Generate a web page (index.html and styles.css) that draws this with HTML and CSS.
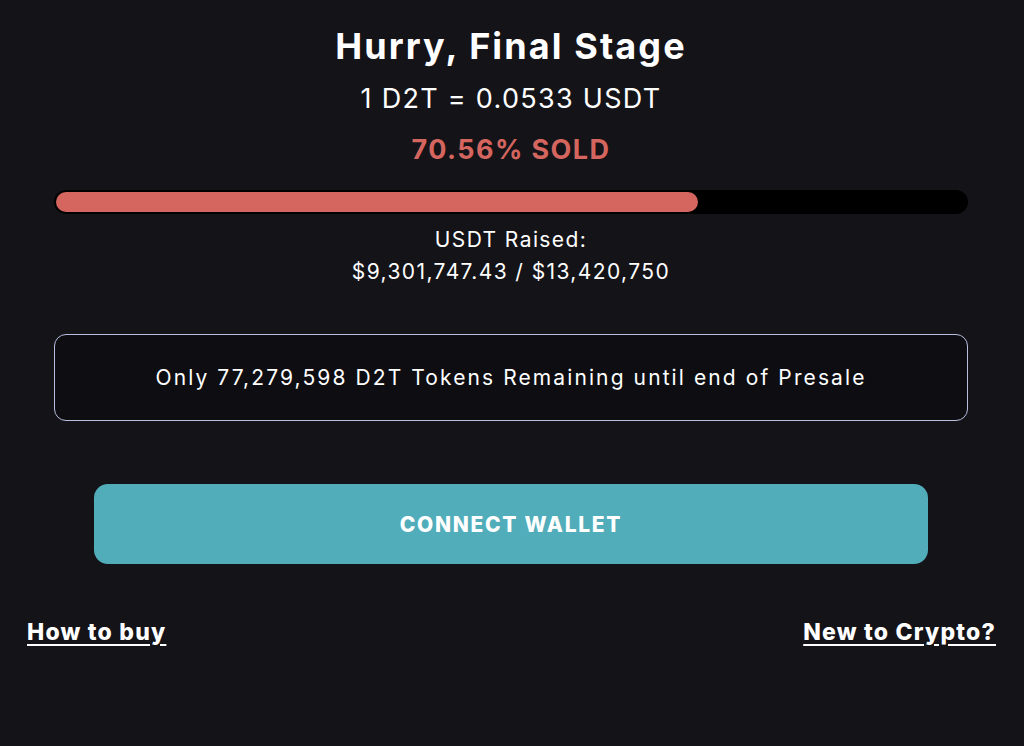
FILE: index.html
```html
<!DOCTYPE html>
<html lang="en">

<head>
    <meta charset="UTF-8">
    <meta name="viewport" content="width=device-width, initial-scale=1.0">
    <title>Presale</title>
    <link rel="stylesheet" href="styles.css">
</head>

<body>
    <div class="presale">
        <h1 class="stage-title">Hurry, Final Stage</h1>
        <p class="price">1 D2T = 0.0533 USDT</p>
        <p class="sold">70.56% SOLD</p>

        <div class="progress">
            <div class="progress-fill" style="width: 70.56%"></div>
        </div>

        <div class="raised">
            <p>USDT Raised:</p>
            <p>$9,301,747.43 / $13,420,750</p>
        </div>

        <div class="remaining">
            Only 77,279,598 D2T Tokens Remaining until end of Presale
        </div>

        <button type="button" class="connect-btn">Connect Wallet</button>

        <div class="links">
            <a href="#">How to buy</a>
            <a href="#">New to Crypto?</a>
        </div>
    </div>
</body>

</html>
```

FILE: styles.css
```css
body {
    font-family: Inter, "Open Sans", sans-serif;
    margin: 0;
    padding: 0;
    background-color: #141318;
    color: #fff;
}

.presale {
    padding: 24px 56px 0 54px;
}

p {
    margin: 0;
}

.stage-title {
    margin: 0;
    font-size: 36px;
    font-weight: 700;
    letter-spacing: 2.1px;
    text-align: center;
    line-height: 44px;
}

.price {
    margin-top: 14px;
    font-size: 27px;
    letter-spacing: 1.3px;
    text-align: center;
    line-height: 34px;
}

.sold {
    margin-top: 17px;
    font-size: 27px;
    font-weight: 700;
    letter-spacing: 1.4px;
    color: #d4655f;
    text-align: center;
    line-height: 34px;
}

.progress {
    margin-top: 23px;
    height: 24px;
    background-color: #000;
    border-radius: 12px;
    padding: 2px;
    box-sizing: border-box;
}

.progress-fill {
    height: 100%;
    background-color: #d4655f;
    border-radius: 10px;
}

.raised {
    margin-top: 10px;
    text-align: center;
    font-size: 21px;
    letter-spacing: 1.4px;
    line-height: 32px;
}

.remaining {
    margin-top: 46px;
    height: 87px;
    box-sizing: border-box;
    display: flex;
    align-items: center;
    justify-content: center;
    background-color: #0e0e12;
    border: 1.5px solid #b8c0e2;
    border-radius: 12px;
    font-size: 21px;
    letter-spacing: 2.1px;
}

.connect-btn {
    display: block;
    width: calc(100% - 80px);
    height: 80px;
    margin: 63px auto 0;
    background-color: #52adbb;
    color: #fff;
    border: none;
    border-radius: 14px;
    font-family: inherit;
    font-size: 21px;
    font-weight: 800;
    text-transform: uppercase;
    letter-spacing: 1.7px;
    cursor: pointer;
}

.links {
    display: flex;
    justify-content: space-between;
    margin: 54px -28px 0 -27px;
}

.links a {
    color: #fff;
    font-size: 23px;
    font-weight: 800;
    letter-spacing: 1.2px;
    text-decoration: underline;
    text-underline-offset: 4px;
}
```
